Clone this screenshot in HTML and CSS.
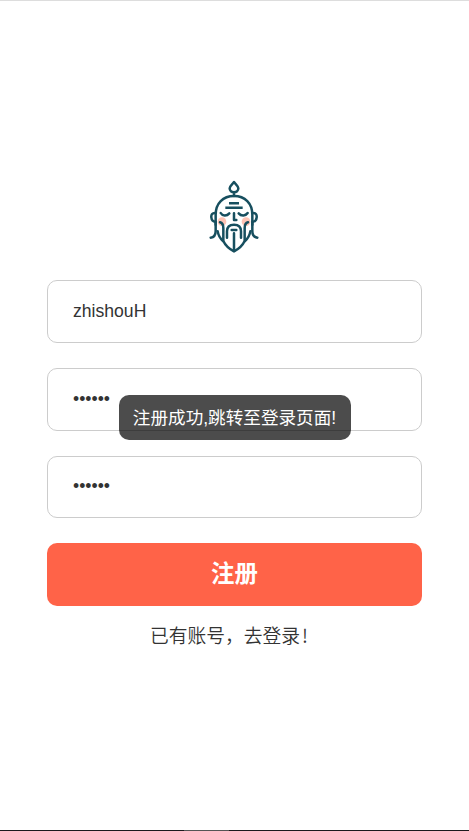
FILE: index.html
```
<!DOCTYPE html>
<html lang="zh-CN">
<head>
<meta charset="utf-8">
<title>注册</title>
<link rel="stylesheet" href="styles.css">
</head>
<body>
<main class="page">
  <svg class="logo" viewBox="0 0 210 270" fill="none" stroke="#174f5f" stroke-width="7.5" stroke-linecap="round" stroke-linejoin="round">
    <g fill="#ffc3b4" stroke="none"><circle cx="69" cy="149" r="13"/><circle cx="141" cy="149" r="13"/></g>
    <path d="M105 30C99 38 92 42 92 49C92 56 98 61 105 61C112 61 118 56 118 49C118 42 111 38 105 30ZM105 62V72"/>
    <path d="M50 158V128C50 94 72 72 105 72S160 94 160 128V158"/>
    <path d="M49 123C40 122 36 128 37 136C38 145 43 149 49 149M161 123C170 122 174 128 173 136C172 145 167 149 161 149"/>
    <path d="M50 150V177C50 188 44 196 35 197M160 150V177C160 188 166 196 175 197"/>
    <path d="M90 94H120M79 107H131" stroke-linecap="butt"/>
    <path d="M65 123C70 132 83 133 91 124M119 124C127 133 140 132 146 123M105 124V144H112"/>
    <path d="M63 151C71 153 73 159 73 168V207C80 222 91 231 105 238C119 231 130 222 137 207V168C137 159 139 153 147 151"/>
    <path d="M84 197V178C84 165 91 158 105 158S126 165 126 178V197M98 174H112M105 184V237"/>
    <path d="M56 178C58 190 63 199 72 207M154 178C152 190 147 199 138 207"/>
  </svg>
  <form class="form">
    <input class="field" type="text" value="zhishouH">
    <div class="field">••••••</div>
    <div class="field short">••••••</div>
    <button class="submit" type="button">注册</button>
  </form>
  <a class="login">已有账号，去登录<span class="mark">!</span></a>
</main>
<div class="toast">注册成功,跳转至登录页面!</div>
<div class="edge"></div>
</body>
</html>
```
FILE: styles.css
```
* { box-sizing: border-box; }
body {
  margin: 0;
  height: 831px;
  overflow: hidden;
  background: #fff;
  color: #333;
  font-family: "Liberation Sans", "Noto Sans CJK SC", sans-serif;
}
.page {
  height: 831px;
  padding: 171px 47px 0;
  border-top: 1px solid #ddd;
  display: flex;
  flex-direction: column;
  align-items: center;
}
.logo { width: 70px; height: 90px; flex: none; margin-right: 1px; }
.form {
  width: 375px;
  margin-top: 18px;
  display: flex;
  flex-direction: column;
  gap: 25px;
}
.field {
  width: 100%;
  height: 63px;
  padding: 0 25px;
  border: 1px solid #ccc;
  border-radius: 10px;
  background: #fff;
  color: #333;
  font: 17.6px/61px "Liberation Sans", sans-serif;
  outline: none;
}
.short { height: 62px; line-height: 59px; }
.submit {
  height: 63px;
  padding: 0 0 4px;
  border: 0;
  border-radius: 10px;
  background: #ff6348;
  color: #fff;
  font: bold 23.4px/57px "Noto Sans CJK SC", sans-serif;
}
.login {
  margin: 15px 11px 0 0;
  font: 350 18.76px/28px "Noto Sans CJK SC", sans-serif;
  white-space: nowrap;
}
.mark { margin-left: 2px; }
.toast {
  position: absolute;
  left: 119px;
  top: 395.4px;
  width: 232px;
  height: 45px;
  padding-right: 1px;
  border-radius: 10px;
  background: rgba(0, 0, 0, .7);
  color: #fff;
  font: 17.6px/46px "Liberation Sans", "Noto Sans CJK SC", sans-serif;
  text-align: center;
  white-space: nowrap;
}
.edge {
  position: absolute;
  left: 0;
  bottom: 0;
  width: 469px;
  height: 1px;
  background: linear-gradient(90deg, #1c1a1d 184px, #555 184px, #555 229px, #1c1a1d 229px);
}
```
